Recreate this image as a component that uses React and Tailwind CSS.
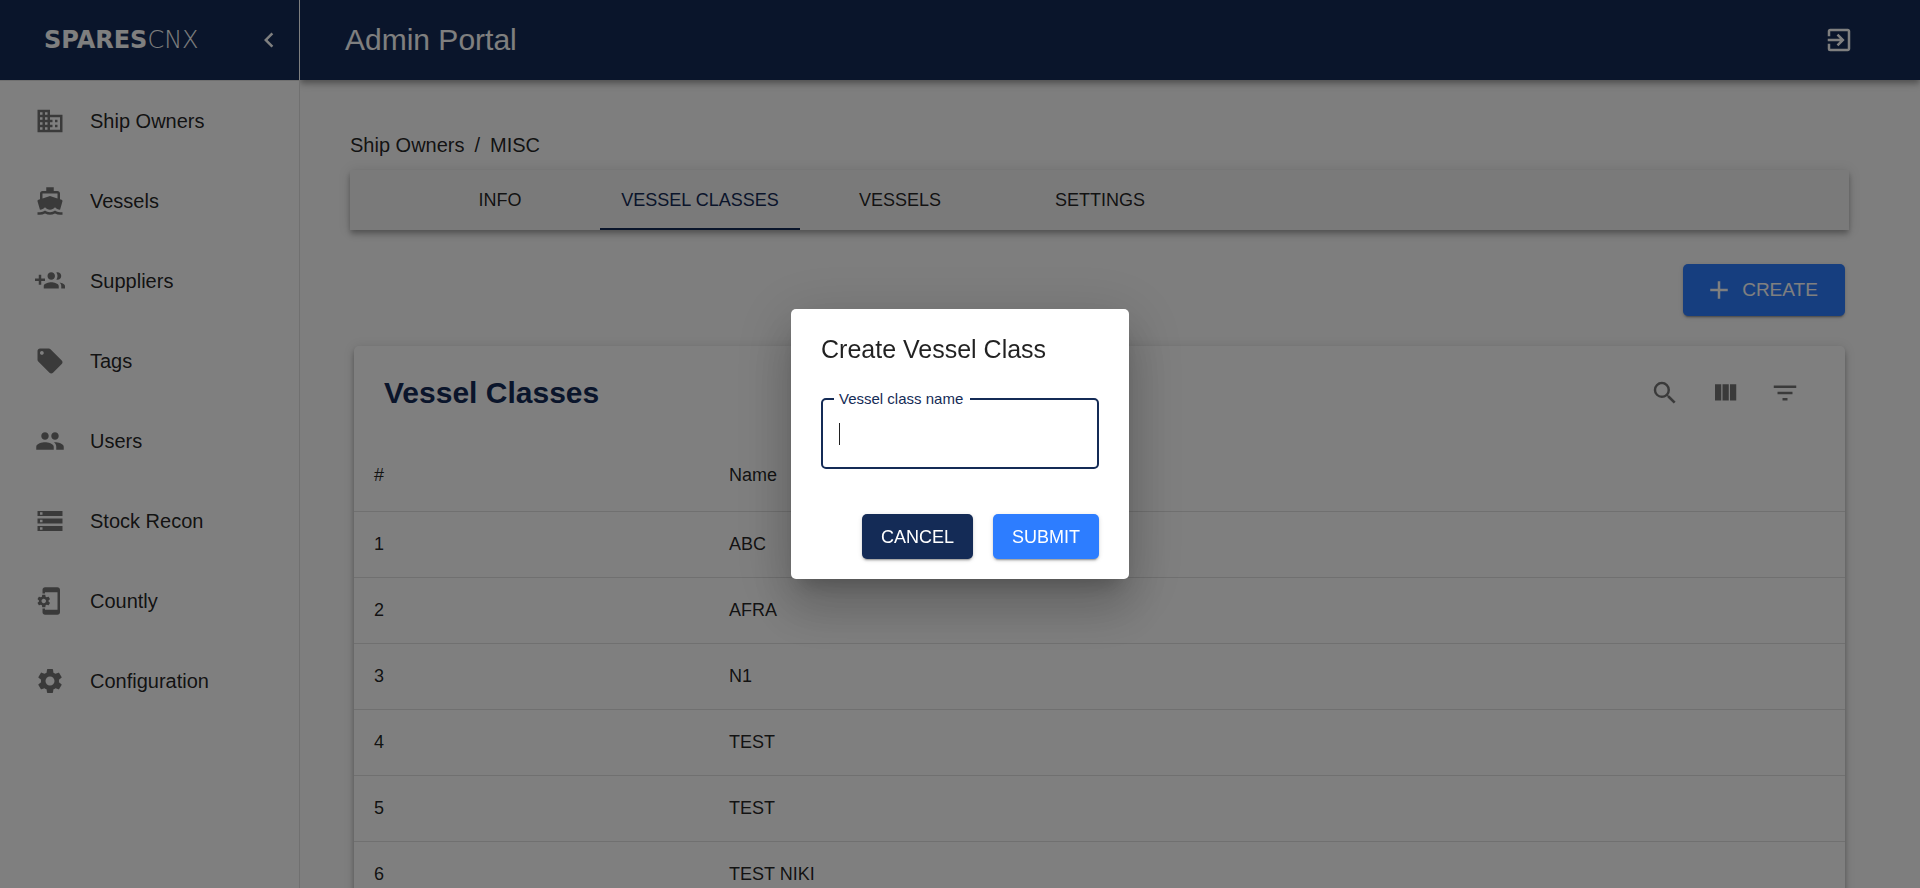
import React from 'react';
import {
  MdAdd,
  MdBusiness,
  MdChevronLeft,
  MdDirectionsBoat,
  MdExitToApp,
  MdFilterList,
  MdLocalOffer,
  MdPeople,
  MdPhonelinkSetup,
  MdSearch,
  MdSettings,
  MdStorage,
} from 'react-icons/md';

function GroupAddIcon({ className }) {
  return (
    <svg viewBox="0 0 24 24" fill="currentColor" className={className} aria-hidden="true">
      <path d="M8 10H5V7H3v3H0v2h3v3h2v-3h3v-2zm10 1c1.66 0 2.99-1.34 2.99-3S19.66 5 18 5c-.32 0-.63.05-.91.14.57.81.9 1.79.9 2.86s-.34 2.04-.9 2.86c.28.09.59.14.91.14zm-5 0c1.66 0 2.99-1.34 2.99-3S14.66 5 13 5c-1.66 0-3 1.34-3 3s1.34 3 3 3zm6.62 2.16c.83.73 1.38 1.66 1.38 2.84v2h3v-2c0-1.54-2.37-2.49-4.38-2.84zM13 13c-2 0-6 1-6 3v2h12v-2c0-2-4-3-6-3z" />
    </svg>
  );
}

function ViewColumnIcon({ className }) {
  return (
    <svg viewBox="0 0 24 24" fill="currentColor" className={className} aria-hidden="true">
      <path d="M10 18h5V5h-5v13zm-6 0h5V5H4v13zM16 5v13h5V5h-5z" />
    </svg>
  );
}

const navItems = [
  { label: 'Ship Owners', Icon: MdBusiness },
  { label: 'Vessels', Icon: MdDirectionsBoat },
  { label: 'Suppliers', Icon: GroupAddIcon },
  { label: 'Tags', Icon: MdLocalOffer },
  { label: 'Users', Icon: MdPeople },
  { label: 'Stock Recon', Icon: MdStorage },
  { label: 'Countly', Icon: MdPhonelinkSetup },
  { label: 'Configuration', Icon: MdSettings },
];

const tabs = ['INFO', 'VESSEL CLASSES', 'VESSELS', 'SETTINGS'];

const tools = [
  { label: 'Search', Icon: MdSearch },
  { label: 'View columns', Icon: ViewColumnIcon },
  { label: 'Filter table', Icon: MdFilterList },
];

const vesselClasses = ['ABC', 'AFRA', 'N1', 'TEST', 'TEST', 'TEST NIKI'];

function Sidebar() {
  return (
    <aside className="z-20 flex w-[300px] shrink-0 flex-col bg-white">
      <div className="flex h-20 shrink-0 items-center justify-between border-r border-white bg-[#142b56] pr-[15px] pl-11 text-white">
        <div className="flex items-center font-['DejaVu_Sans',sans-serif] text-2xl">
          <span className="font-bold">SPARES</span>
          <span className="font-extralight">CNX</span>
        </div>
        <button type="button" aria-label="Collapse menu">
          <MdChevronLeft className="size-[30px]" />
        </button>
      </div>
      <nav className="flex-1 border-t border-r border-black/12">
        <ul>
          {navItems.map(({ label, Icon }) => (
            <li key={label}>
              <a href="#" className="flex h-20 items-center gap-[25px] pl-[35px] text-xl">
                <Icon className="size-[30px] text-black/54" />
                {label}
              </a>
            </li>
          ))}
        </ul>
      </nav>
    </aside>
  );
}

function VesselClassCard() {
  return (
    <section className="mx-1 rounded-[5px] bg-white shadow-[0_3px_5px_-1px_rgba(0,0,0,0.2),0_5px_6px_0_rgba(0,0,0,0.14),0_1px_12px_0_rgba(0,0,0,0.12)]">
      <div className="flex h-[94px] items-center justify-between pr-[45px] pl-[30px]">
        <h2 className="text-3xl font-bold text-[#142b56]">Vessel Classes</h2>
        <div className="flex gap-[30px] text-black/54">
          {tools.map(({ label, Icon }) => (
            <button key={label} type="button" aria-label={label}>
              <Icon className="size-[30px]" />
            </button>
          ))}
        </div>
      </div>
      <table className="w-full table-fixed border-collapse text-left text-lg">
        <thead>
          <tr className="h-[71px] border-b border-[#e0e0e0]">
            <th className="w-[355px] px-5 font-normal">#</th>
            <th className="px-5 font-normal">Name</th>
          </tr>
        </thead>
        <tbody>
          {vesselClasses.map((name, index) => (
            <tr key={index} className="h-[66px] border-b border-[#e0e0e0]">
              <td className="px-5">{index + 1}</td>
              <td className="px-5">{name}</td>
            </tr>
          ))}
        </tbody>
      </table>
    </section>
  );
}

function CreateDialog() {
  return (
    <div className="fixed inset-0 z-30 flex items-center justify-center bg-black/50">
      <form
        role="dialog"
        aria-modal="true"
        aria-labelledby="dialog-title"
        className="w-[338px] rounded-[5px] bg-white px-[30px] py-5 shadow-[0_14px_19px_-9px_rgba(0,0,0,0.2),0_30px_48px_4px_rgba(0,0,0,0.14),0_11px_58px_10px_rgba(0,0,0,0.12)]"
      >
        <h2 id="dialog-title" className="text-[25px] leading-10">
          Create Vessel Class
        </h2>
        <div className="relative mt-[29px]">
          <label
            htmlFor="class-name"
            className="absolute -top-[9px] left-[13px] bg-white pr-[7px] pl-[5px] text-[15px] leading-5 text-[#142b56]"
          >
            Vessel class name
          </label>
          <input
            id="class-name"
            type="text"
            className="block h-[71px] w-full rounded-[5px] border-2 border-[#142b56] px-4 text-xl caret-transparent outline-none"
          />
          <span className="absolute top-[25px] left-[18px] h-[22px] w-px bg-black/87" />
        </div>
        <div className="mt-[45px] flex justify-end gap-5 text-lg text-white">
          <button
            type="button"
            className="h-[45px] w-[111px] rounded-[5px] bg-[#142b56] shadow-[0_3px_1px_-2px_rgba(0,0,0,0.2),0_2px_2px_0_rgba(0,0,0,0.14),0_1px_5px_0_rgba(0,0,0,0.12)]"
          >
            CANCEL
          </button>
          <button
            type="submit"
            className="h-[45px] w-[106px] rounded-[5px] bg-[#2d7dff] shadow-[0_3px_1px_-2px_rgba(0,0,0,0.2),0_2px_2px_0_rgba(0,0,0,0.14),0_1px_5px_0_rgba(0,0,0,0.12)]"
          >
            SUBMIT
          </button>
        </div>
      </form>
    </div>
  );
}

export default function App() {
  return (
    <div className="flex h-screen overflow-hidden bg-[#fcfcfc] font-['Liberation_Sans',Arial,sans-serif] text-black/87">
      <Sidebar />
      <div className="flex min-w-0 flex-1 flex-col">
        <header className="z-10 flex h-20 shrink-0 items-center justify-between bg-[#142b56] pr-[66px] pl-[45px] text-white shadow-[0_3px_5px_-1px_rgba(0,0,0,0.2),0_5px_6px_0_rgba(0,0,0,0.14),0_1px_12px_0_rgba(0,0,0,0.12)]">
          <h1 className="text-3xl">Admin Portal</h1>
          <button type="button" aria-label="Log out">
            <MdExitToApp className="size-[30px]" />
          </button>
        </header>
        <main className="flex-1 overflow-y-auto pt-[50px] pr-[71px] pl-[50px] [scrollbar-width:none]">
          <nav aria-label="Breadcrumb" className="flex h-[30px] items-center gap-[10px] text-xl">
            <a href="#">Ship Owners</a>
            <span>/</span>
            <span>MISC</span>
          </nav>
          <div
            role="tablist"
            className="mt-[10px] flex h-[60px] bg-[#f5f5f5] pl-[50px] shadow-[0_3px_5px_-1px_rgba(0,0,0,0.2),0_5px_6px_0_rgba(0,0,0,0.14),0_1px_12px_0_rgba(0,0,0,0.12)]"
          >
            {tabs.map((tab) => (
              <button
                key={tab}
                type="button"
                role="tab"
                aria-selected={tab === 'VESSEL CLASSES'}
                className="w-[200px] border-y-2 border-transparent text-lg aria-selected:border-b-[#142b56] aria-selected:text-[#142b56]"
              >
                {tab}
              </button>
            ))}
          </div>
          <div className="mx-1 mt-[34px] mb-[30px] flex justify-end">
            <button
              type="button"
              className="flex h-[52px] w-[162px] items-center justify-center gap-2 rounded-[5px] bg-[#2d7dff] pr-[6px] text-[19px] text-white shadow-[0_3px_1px_-2px_rgba(0,0,0,0.2),0_2px_2px_0_rgba(0,0,0,0.14),0_1px_5px_0_rgba(0,0,0,0.12)]"
            >
              <MdAdd className="size-[30px]" />
              CREATE
            </button>
          </div>
          <VesselClassCard />
        </main>
      </div>
      <CreateDialog />
    </div>
  );
}
